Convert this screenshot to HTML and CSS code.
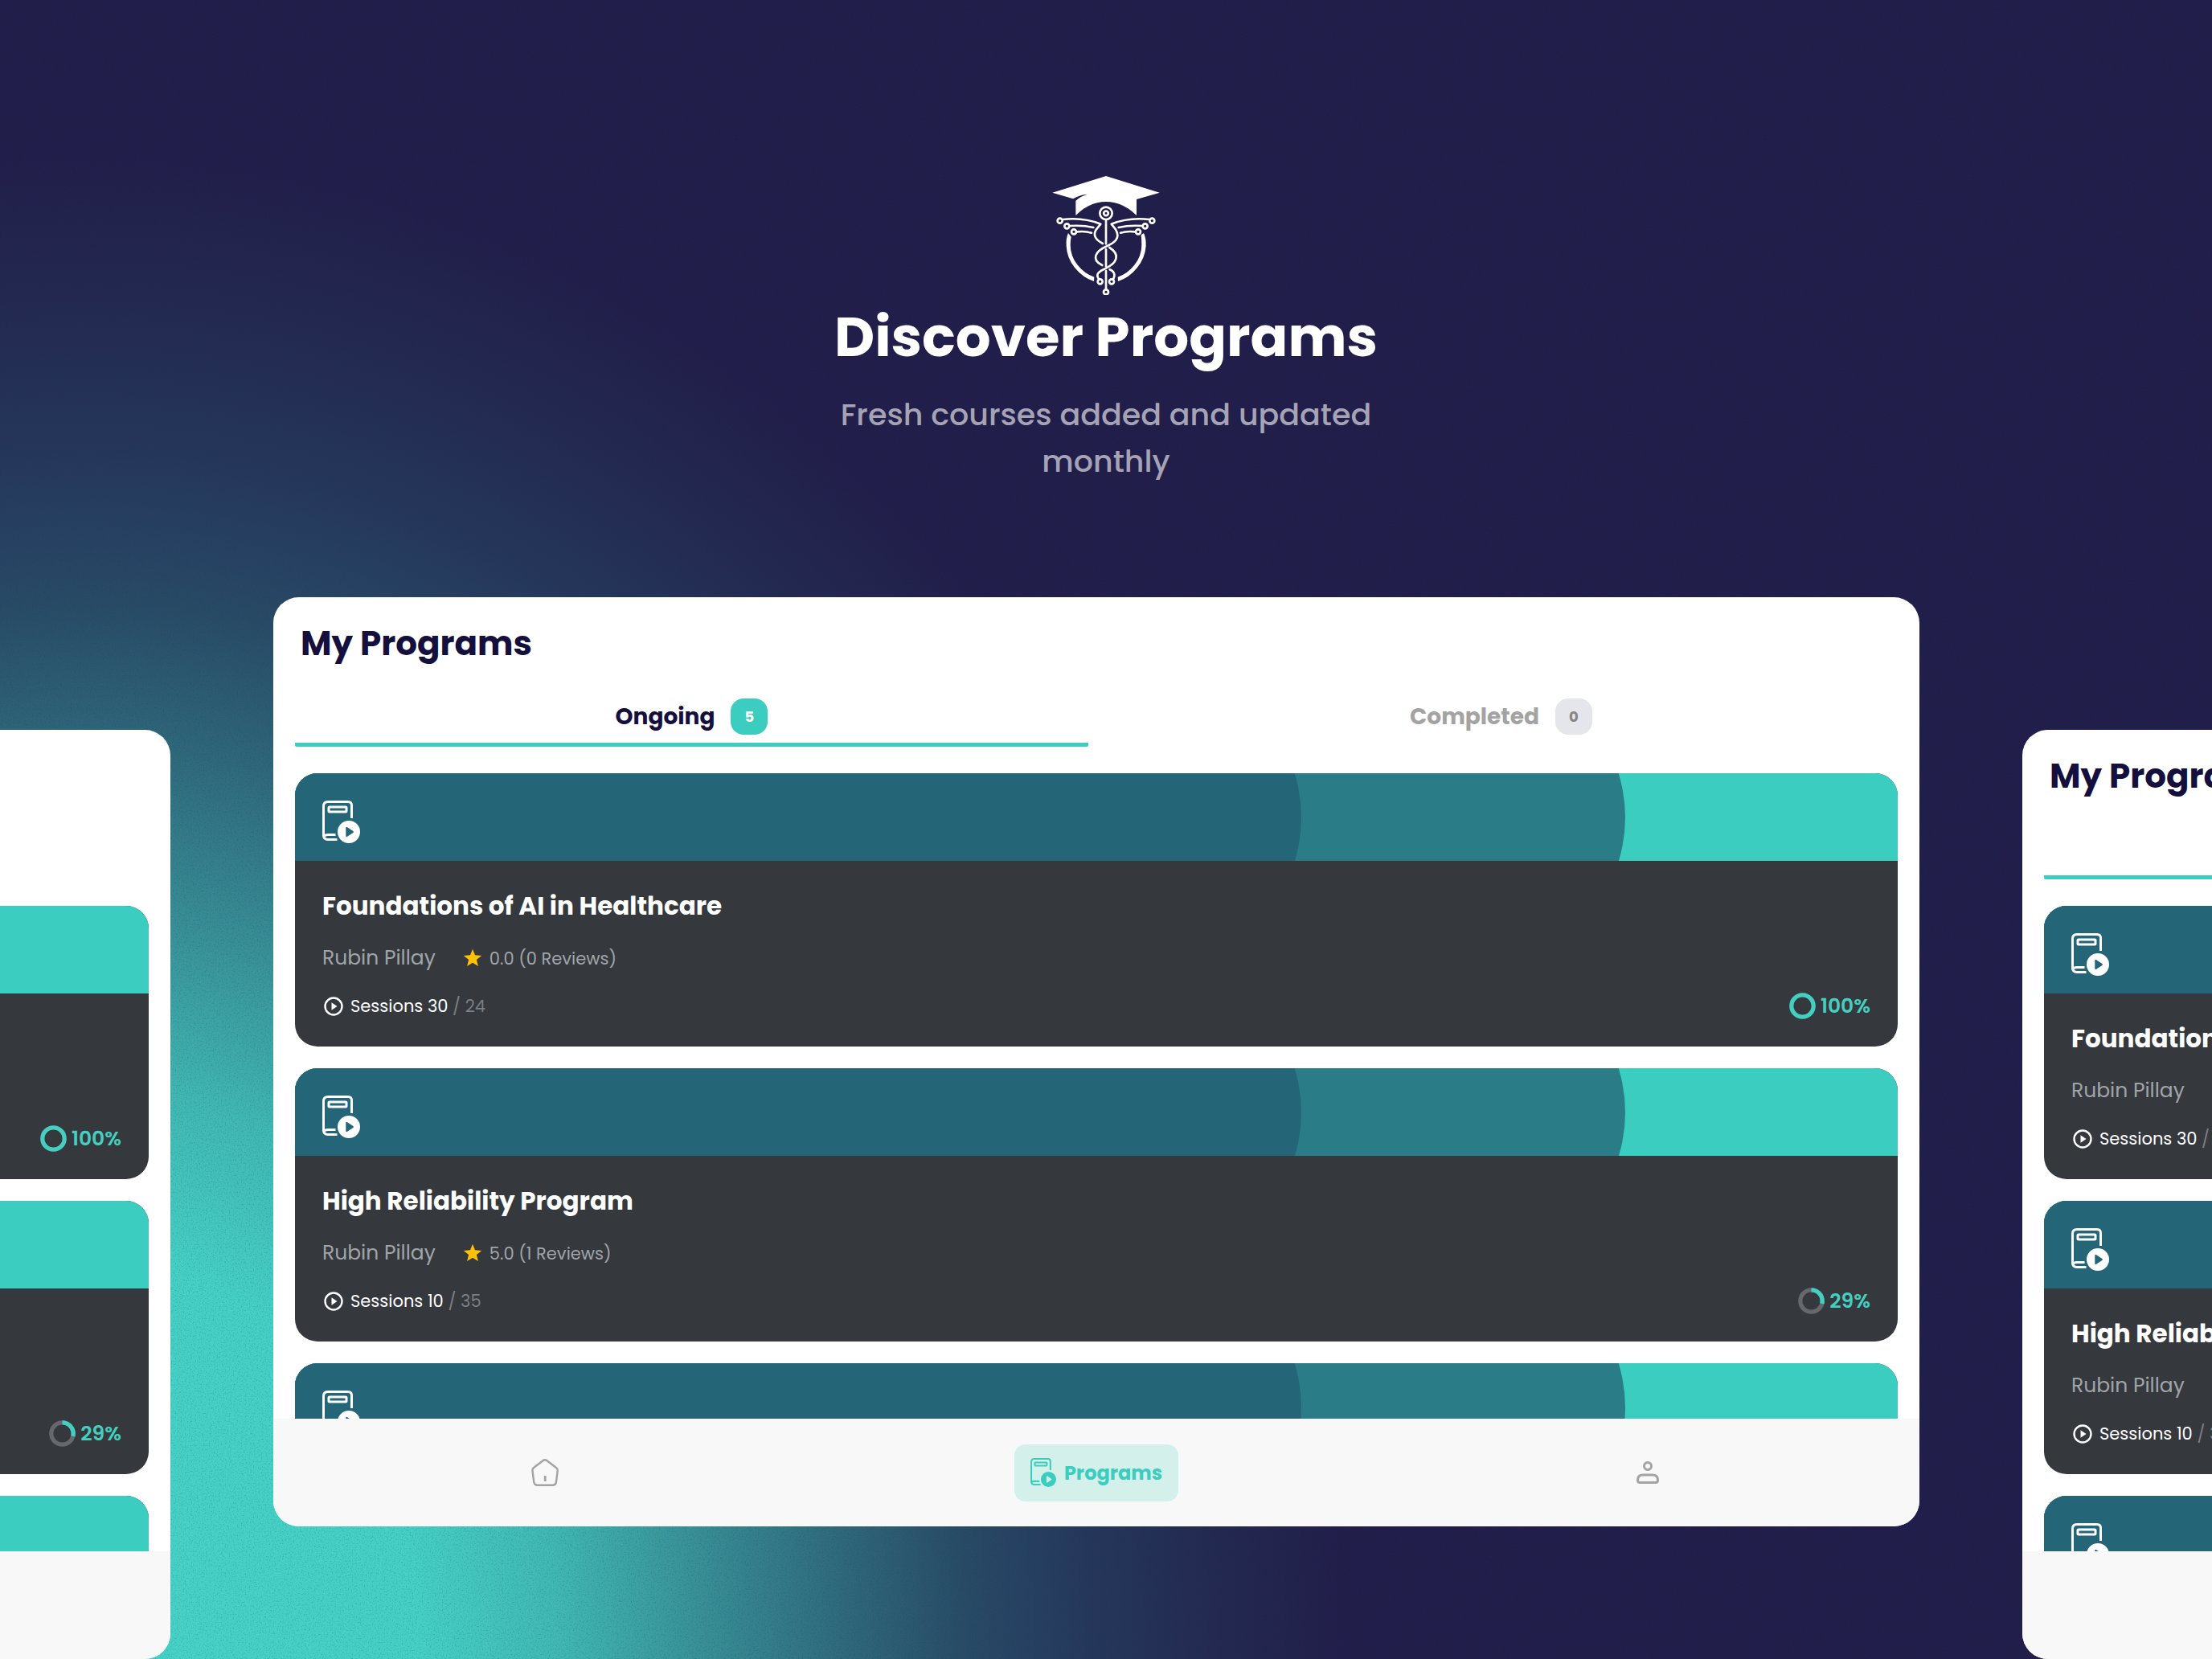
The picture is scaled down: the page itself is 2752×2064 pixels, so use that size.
FILE: index.html
```html
<!DOCTYPE html>
<html lang="en">
<head>
<meta charset="utf-8">
<meta name="viewport" content="width=device-width, initial-scale=1">
<title>Discover Programs</title>
<link rel="stylesheet" href="styles.css">
</head>
<body>
<svg class="defs" aria-hidden="true">
  <symbol id="book" viewBox="0 0 47 53">
    <g fill="none" stroke="currentColor" stroke-width="3">
      <path d="M36.500 22V6Q36.500 1.500 32 1.500H7Q1.500 1.500 1.500 7V43Q1.500 48.500 7 48.500H18.500"/>
      <path d="M1.500 45Q3 42.500 7 42.500H16.500"/>
      <rect x="8" y="8" width="22" height="6" rx="1"/>
    </g>
    <path fill="currentColor" fill-rule="evenodd" d="M33 25a14 14 0 1 1 0 28a14 14 0 1 1 0-28zM29.300 34.200v9.600q0 2 1.800 1l7.300-4.900q1.200-.9 0-1.800l-7.300-4.900q-1.800-1-1.800 1z"/>
  </symbol>
  <symbol id="play" viewBox="0 0 24 24">
    <circle cx="12" cy="12" r="10.500" fill="none" stroke="currentColor" stroke-width="2.400"/>
    <path fill="currentColor" d="M9.500 7.200L16.500 12L9.500 16.800Z"/>
  </symbol>
  <symbol id="star" viewBox="0 0 24 24">
    <path fill="#ffc107" d="M12 .8l3 7.500 8.200.6-6.300 5.200 2 8-6.900-4.400L5.100 22.100l2-8L.8 8.900 9 8.300z"/>
  </symbol>
  <symbol id="home" viewBox="0 0 34 34">
    <path fill="none" stroke="currentColor" stroke-width="2.400" stroke-linejoin="round" d="M14.500 2.200Q17 .4 19.500 2.200L31 11Q33 12.500 32.700 15L31 28.500Q30.400 32.700 26.500 32.700H8Q3.900 32.700 3.200 28.500L1.500 15Q1.200 12.500 3 11Z"/>
    <path stroke="currentColor" stroke-width="2.800" d="M17.200 21v7"/>
  </symbol>
  <symbol id="person" viewBox="0 0 28 28">
    <g fill="none" stroke="currentColor" stroke-width="3">
      <circle cx="14" cy="6" r="4.500"/>
      <path d="M8 17H20Q26.500 17 26.500 23.500Q26.500 26.500 23.500 26.500H4.500Q1.500 26.500 1.500 23.500Q1.500 17 8 17Z"/>
    </g>
  </symbol>
  <symbol id="ring-full" viewBox="0 0 33 33">
    <circle cx="16.500" cy="16.500" r="13.700" fill="none" stroke="currentColor" stroke-width="5.300"/>
  </symbol>
  <symbol id="ring-29" viewBox="0 0 33 33">
    <circle cx="16.500" cy="16.500" r="13.700" fill="none" stroke="#66686d" stroke-width="5.300"/>
    <circle cx="16.500" cy="16.500" r="13.700" fill="none" stroke="currentColor" stroke-width="5.300" pathLength="100" stroke-dasharray="29 71" transform="rotate(-90 16.500 16.500)"/>
  </symbol>
</svg>

<svg class="grain" aria-hidden="true">
  <filter id="noise" x="0" y="0" width="100%" height="100%">
    <feTurbulence type="fractalNoise" baseFrequency="0.600" numOctaves="2" seed="4"/>
    <feColorMatrix values="0 0 0 0 0  0 0 0 0 0.050  0 0 0 0 0.200  3 0 0 0 -1.500"/>
  </filter>
  <rect width="100%" height="100%" filter="url(#noise)"/>
</svg>

<header class="hero">
  <svg class="logo" viewBox="88 50 400 450" role="img" aria-label="Academy logo">
    <g fill="#fff">
      <path d="M288 56L488 118L402 143V203Q350 152 288 152Q226 152 175 203V148Q192 132 219 124Q190 126 165 141L88 118Z"/>
      <path d="M147 269Q138 288 140 317Q142 362 172 399Q203 437 243 449L244 433Q207 421 181 387Q155 353 155 313Q155 296 158 283Z"/>
      <path d="M429 269Q438 288 437 317Q434 362 404 399Q373 437 333 449L332 433Q369 421 395 387Q421 353 421 313Q421 296 419 276Z"/>
    </g>
    <g fill="none" stroke="#fff" stroke-width="8" stroke-linecap="round" stroke-linejoin="round">
      <circle cx="288" cy="195" r="23"/>
      <circle cx="288" cy="195" r="8.500"/>
      <path d="M288 220V309M288 330V393M288 410V477"/>
      <circle cx="288" cy="489" r="9"/>
      <circle cx="116" cy="223" r="9"/><circle cx="142" cy="243" r="9"/><circle cx="168" cy="264" r="9"/>
      <circle cx="460" cy="223" r="9"/><circle cx="434" cy="243" r="9"/><circle cx="408" cy="264" r="9"/>
      <circle cx="266" cy="450" r="9"/><circle cx="309" cy="450" r="9"/>
      <path d="M127 218Q202 209 268 235L252 255Q232 285 276 308"/>
      <path d="M154 242Q202 239 241 248M180 264Q210 261 234 268"/>
      <path d="M449 218Q374 209 308 235L324 255C344 290 318 306 288 319C250 336 230 368 274 389"/>
      <path d="M422 242Q374 239 335 248M396 264Q366 261 342 268"/>
      <path d="M301 323C345 350 326 382 288 400C258 413 250 423 260 439"/>
      <path d="M302 405Q327 416 316 439"/>
    </g>
  </svg>
  <h1>Discover Programs</h1>
  <p>Fresh courses added and updated monthly</p>
</header>

<main class="stage">
  <section class="panel side">
    <h2>My Programs</h2>
    <div class="tabs">
      <button class="tab active" type="button">Ongoing <span class="count">5</span></button>
      <button class="tab" type="button">Completed <span class="count">0</span></button>
    </div>
    <div class="list">
      <article class="card">
        <div class="banner"><svg><use href="#book"/></svg></div>
        <div class="info">
          <h3>Foundations of AI in Healthcare</h3>
          <div class="meta"><span class="author">Rubin Pillay</span><svg class="star"><use href="#star"/></svg><span>0.0 (0 Reviews)</span></div>
          <div class="status"><svg class="play"><use href="#play"/></svg><span>Sessions 30 <span class="total">/ 24</span></span><span class="progress"><svg><use href="#ring-full"/></svg>100%</span></div>
        </div>
      </article>
      <article class="card">
        <div class="banner"><svg><use href="#book"/></svg></div>
        <div class="info">
          <h3>High Reliability Program</h3>
          <div class="meta"><span class="author">Rubin Pillay</span><svg class="star"><use href="#star"/></svg><span>5.0 (1 Reviews)</span></div>
          <div class="status"><svg class="play"><use href="#play"/></svg><span>Sessions 10 <span class="total">/ 35</span></span><span class="progress"><svg><use href="#ring-29"/></svg>29%</span></div>
        </div>
      </article>
      <article class="card"><div class="banner"><svg><use href="#book"/></svg></div></article>
    </div>
    <nav class="bar">
      <a href="#home" aria-label="Home"><svg class="home"><use href="#home"/></svg></a>
      <a href="#programs" class="current"><svg class="book"><use href="#book"/></svg>Programs</a>
      <a href="#profile" aria-label="Profile"><svg class="person"><use href="#person"/></svg></a>
    </nav>
  </section>

  <section class="panel">
    <h2>My Programs</h2>
    <div class="tabs">
      <button class="tab active" type="button">Ongoing <span class="count">5</span></button>
      <button class="tab" type="button">Completed <span class="count">0</span></button>
    </div>
    <div class="list">
      <article class="card">
        <div class="banner"><svg><use href="#book"/></svg></div>
        <div class="info">
          <h3>Foundations of AI in Healthcare</h3>
          <div class="meta"><span class="author">Rubin Pillay</span><svg class="star"><use href="#star"/></svg><span>0.0 (0 Reviews)</span></div>
          <div class="status"><svg class="play"><use href="#play"/></svg><span>Sessions 30 <span class="total">/ 24</span></span><span class="progress"><svg><use href="#ring-full"/></svg>100%</span></div>
        </div>
      </article>
      <article class="card">
        <div class="banner"><svg><use href="#book"/></svg></div>
        <div class="info">
          <h3>High Reliability Program</h3>
          <div class="meta"><span class="author">Rubin Pillay</span><svg class="star"><use href="#star"/></svg><span>5.0 (1 Reviews)</span></div>
          <div class="status"><svg class="play"><use href="#play"/></svg><span>Sessions 10 <span class="total">/ 35</span></span><span class="progress"><svg><use href="#ring-29"/></svg>29%</span></div>
        </div>
      </article>
      <article class="card"><div class="banner"><svg><use href="#book"/></svg></div></article>
    </div>
    <nav class="bar">
      <a href="#home" aria-label="Home"><svg class="home"><use href="#home"/></svg></a>
      <a href="#programs" class="current"><svg class="book"><use href="#book"/></svg>Programs</a>
      <a href="#profile" aria-label="Profile"><svg class="person"><use href="#person"/></svg></a>
    </nav>
  </section>

  <section class="panel side">
    <h2>My Programs</h2>
    <div class="tabs">
      <button class="tab active" type="button">Ongoing <span class="count">5</span></button>
      <button class="tab" type="button">Completed <span class="count">0</span></button>
    </div>
    <div class="list">
      <article class="card">
        <div class="banner"><svg><use href="#book"/></svg></div>
        <div class="info">
          <h3>Foundations of AI in Healthcare</h3>
          <div class="meta"><span class="author">Rubin Pillay</span><svg class="star"><use href="#star"/></svg><span>0.0 (0 Reviews)</span></div>
          <div class="status"><svg class="play"><use href="#play"/></svg><span>Sessions 30 <span class="total">/ 24</span></span><span class="progress"><svg><use href="#ring-full"/></svg>100%</span></div>
        </div>
      </article>
      <article class="card">
        <div class="banner"><svg><use href="#book"/></svg></div>
        <div class="info">
          <h3>High Reliability Program</h3>
          <div class="meta"><span class="author">Rubin Pillay</span><svg class="star"><use href="#star"/></svg><span>5.0 (1 Reviews)</span></div>
          <div class="status"><svg class="play"><use href="#play"/></svg><span>Sessions 10 <span class="total">/ 35</span></span><span class="progress"><svg><use href="#ring-29"/></svg>29%</span></div>
        </div>
      </article>
      <article class="card"><div class="banner"><svg><use href="#book"/></svg></div></article>
    </div>
    <nav class="bar">
      <a href="#home" aria-label="Home"><svg class="home"><use href="#home"/></svg></a>
      <a href="#programs" class="current"><svg class="book"><use href="#book"/></svg>Programs</a>
      <a href="#profile" aria-label="Profile"><svg class="person"><use href="#person"/></svg></a>
    </nav>
  </section>
</main>
</body>
</html>
```
FILE: styles.css
```css
:root {
  --teal: #3bcdc0;
  --ink: #140f3d;
  --navy: #221d49;
}

* { box-sizing: border-box; margin: 0; }

body {
  position: relative;
  min-height: 100vh;
  overflow: hidden;
  font-family: Poppins, Inter, "Noto Sans", sans-serif;
  background:
    radial-gradient(ellipse 1580px 1880px at 100px 2064px,
      #48d2c6 0%, #46cfc3 27%, #41b7b1 38%, #398f95 49%,
      #30697b 60%, #294a65 70%, #26365a 80%, #24284f 90%, var(--navy) 100%);
}

.defs { position: absolute; width: 0; height: 0; }

.grain {
  position: absolute;
  inset: 0;
  z-index: -1;
  width: 100%;
  height: 100%;
  opacity: .2;
}

.hero {
  display: flex;
  flex-direction: column;
  align-items: center;
  padding-top: 217px;
  text-align: center;
}

.logo { width: 134px; height: 150px; }

.hero h1 {
  margin-top: 12px;
  color: #fff;
  font-size: 69px;
  font-weight: 700;
  line-height: 80px;
}

.hero p {
  max-width: 720px;
  margin-top: 28px;
  color: #a6a3b5;
  font-size: 38px;
  font-weight: 500;
  line-height: 58px;
}

/* The middle panel fits the window; its neighbours run off both edges. */
.stage {
  display: grid;
  grid-template-columns: repeat(3, calc(100vw - 704px));
  gap: 128px;
  justify-content: center;
  align-items: start;
  margin-top: 140px;
  padding-right: 24px;
  overflow: hidden;
}

.panel {
  display: flex;
  flex-direction: column;
  height: calc(100vh - 908px);
  padding-top: 30px;
  overflow: hidden;
  border-radius: 32px;
  background: #fff;
}

.side { margin-top: 165px; }

.panel h2 {
  padding: 0 34px;
  color: var(--ink);
  font-size: 42px;
  font-weight: 700;
  line-height: 56px;
}

.tabs {
  display: grid;
  grid-template-columns: 1fr 1fr;
  gap: 20px;
  margin: 40px 27px 33px;
}

.tab {
  display: flex;
  align-items: center;
  justify-content: center;
  gap: 20px;
  padding: 0 0 10px;
  border: 0;
  border-bottom: 5px solid transparent;
  border-radius: 2px;
  background: none;
  color: #a3a3a3;
  font: 700 28px/45px Poppins, Inter, "Noto Sans", sans-serif;
}

.tab.active { border-color: var(--teal); color: var(--ink); }

.count {
  width: 46px;
  height: 45px;
  border-radius: 16px;
  background: #e5e6eb;
  color: #858585;
  font-size: 18px;
  text-align: center;
}

.active .count { background: var(--teal); color: #fff; }

.list {
  display: flex;
  flex: 1;
  flex-direction: column;
  gap: 27px;
  min-height: 0;
  padding: 0 27px;
  overflow: hidden;
}

.card {
  flex: none;
  overflow: hidden;
  border-radius: 28px;
  background: #35383d;
  color: #a0a5aa;
}

.banner {
  position: relative;
  display: flex;
  align-items: center;
  height: 109px;
  padding: 12px 34px 0;
  overflow: hidden;
  background: var(--teal);
  color: #fff;
}

.banner svg { position: relative; z-index: 1; width: 47px; height: 53px; }

.banner::before,
.banner::after {
  content: "";
  position: absolute;
  top: -130px;
  left: 0;
  height: 370px;
  border-radius: 0 185px 185px 0;
}

.banner::before { width: 83%; background: #2a7c87; }
.banner::after { width: calc(63% - 4px); background: #246577; }

.info { padding: 36px 34px 34px; }

.info h3 {
  color: #fff;
  font-size: 31px;
  font-weight: 700;
  line-height: 40px;
}

.meta, .status, .progress { display: flex; align-items: center; }

.meta { height: 32px; margin: 29px 0 27px; font-size: 21px; }
.author { font-size: 25px; }
.star { width: 24px; height: 24px; margin: 0 9px 0 34px; }

.status { height: 33px; color: #fff; font-size: 21px; }
.play { width: 24px; height: 24px; margin: 0 9px 0 2px; }
.total { color: #7d7f83; }

.progress {
  gap: 6px;
  margin-left: auto;
  color: #44d0c0;
  font-size: 25px;
  font-weight: 600;
}

.progress svg { width: 33px; height: 33px; }

.bar {
  display: grid;
  grid-template-columns: repeat(3, 1fr);
  gap: 10px;
  place-items: center;
  height: 134px;
  background: #f8f8f8;
}

.bar a {
  display: flex;
  align-items: center;
  color: #a3a3a3;
  text-decoration: none;
}

.bar .current {
  gap: 10px;
  height: 71px;
  padding: 0 20px;
  border-radius: 14px;
  background: #d3f0eb;
  color: var(--teal);
  font-size: 24px;
  font-weight: 700;
}

.home { width: 34px; height: 34px; }
.book { width: 32px; height: 36px; }
.person { width: 28px; height: 28px; }
```
